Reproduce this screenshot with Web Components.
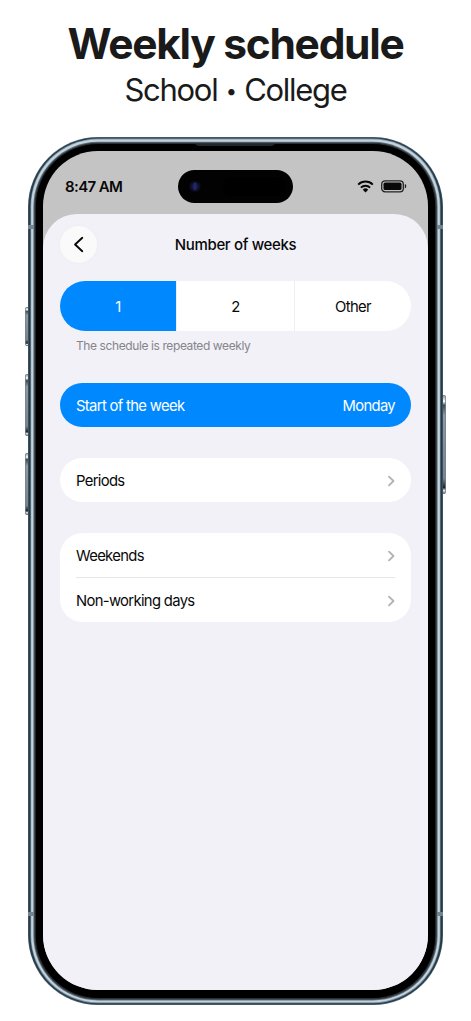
<!DOCTYPE html>
<html lang="en">
<head>
<meta charset="utf-8">
<meta name="viewport" content="width=device-width, initial-scale=1">
<title>Weekly schedule</title>
<style>
  body {
    margin: 0;
    height: 1021px;
    overflow: hidden;
    background: #fff;
    font-family: Inter, "Liberation Sans", sans-serif;
  }

  .dot {
    font-size: 20px;
    line-height: 1;
    vertical-align: 3px;
    margin: 0 1px;
  }
</style>
</head>
<body>
<promo-page>
  <promo-header slot="header" title-text="Weekly schedule">School <span class="dot">•</span> College</promo-header>
  <phone-frame>
    <status-bar slot="status" time="8:47 AM"></status-bar>
    <nav-bar>Number of weeks</nav-bar>
    <segment-control options="1,2,Other" selected="0"></segment-control>
    <hint-text>The schedule is repeated weekly</hint-text>
    <list-group accent>
      <list-row value="Monday">Start of the week</list-row>
    </list-group>
    <list-group>
      <list-row>Periods</list-row>
    </list-group>
    <list-group>
      <list-row>Weekends</list-row>
      <list-row divided>Non-working days</list-row>
    </list-group>
  </phone-frame>
</promo-page>

<script>
class PromoPage extends HTMLElement {
  constructor() {
    super();
    this.attachShadow({ mode: "open" }).innerHTML = `
    <style>
      :host {
        display: flex;
        flex-direction: column;
        width: 471px;
        height: 1021px;
      }
    </style>
    <slot name="header"></slot>
    <slot></slot>
  `;
  }
}
customElements.define("promo-page", PromoPage);

class PromoHeader extends HTMLElement {
  connectedCallback() {
    this.attachShadow({ mode: "open" }).innerHTML = `
    <style>
      :host {
        display: block;
        box-sizing: border-box;
        height: 137px;
        padding-top: 18px;
        text-align: center;
        color: #1a1a1a;
        white-space: nowrap;
      }

      h1 {
        margin: 0;
        font-size: 42.5px;
        line-height: 52px;
        font-weight: 700;
        letter-spacing: -1.3px;
      }

      p {
        margin: 0;
        font-size: 31px;
        line-height: 40px;
        letter-spacing: -1.3px;
      }
    </style>
    <h1>${this.getAttribute("title-text")}</h1>
    <p><slot></slot></p>
  `;
  }
}
customElements.define("promo-header", PromoHeader);

class PhoneFrame extends HTMLElement {
  constructor() {
    super();
    this.attachShadow({ mode: "open" }).innerHTML = `
    <style>
      :host {
        display: block;
        position: relative;
        width: 415px;
        height: 868px;
        margin-left: 28px;
      }

      /* metal rim, black bezel and side buttons lie behind the screen */
      .case {
        position: absolute;
        left: -4px;
        top: 0;
      }

      .screen {
        position: relative;
        box-sizing: border-box;
        display: flex;
        flex-direction: column;
        width: 385px;
        height: 839px;
        margin-left: 15px;
        overflow: hidden;
        border-radius: 55px;
        background: #c4c4c4;
        top: 14px;
      }

      .sheet {
        flex: 1;
        padding: 0 17px;
        border-radius: 34px 34px 0 0;
        background: #f2f1f8;
      }
    </style>
    <svg class="case" width="423" height="868" viewBox="0 0 423 868">
      <defs>
        <linearGradient id="side" x1="0" y1="0" x2="0" y2="1">
          <stop offset="0" stop-color="#8d979e"/>
          <stop offset=".06" stop-color="#fff"/>
          <stop offset=".1" stop-color="#3c4a54"/>
          <stop offset=".2" stop-color="#8b9aa4"/>
          <stop offset=".85" stop-color="#75848e"/>
          <stop offset=".94" stop-color="#17222b"/>
          <stop offset=".97" stop-color="#e5ecf0"/>
          <stop offset="1" stop-color="#59656e"/>
        </linearGradient>
      </defs>
      <g fill="url(#side)" stroke="#4b5963" stroke-width=".6">
        <rect x="1.5" y="170.5" width="4" height="38" rx="1"/>
        <rect x="1.5" y="237.5" width="4" height="61" rx="1"/>
        <rect x="1.5" y="316.5" width="4" height="61" rx="1"/>
        <rect x="417.5" y="258.5" width="4" height="98" rx="1"/>
      </g>
      <rect x="4" y="0" width="415" height="868" rx="70" fill="#4d606e"/>
      <rect x="4.6" y=".7" width="413.8" height="866.6" rx="69.4" fill="#263b49"/>
      <rect x="6.5" y="1.6" width="410" height="864.6" rx="67.5" fill="#7d909d"/>
      <rect x="7.2" y="2.4" width="408.6" height="862.8" rx="66.8" fill="#c3d4df"/>
      <rect x="9.4" y="4.8" width="404.2" height="858.6" rx="64.6" fill="#5c6a75"/>
      <rect x="10.4" y="5.8" width="402.2" height="856.6" rx="63.6" fill="#2b3034"/>
      <rect x="11.8" y="7" width="399.4" height="854" rx="62.2" fill="#000"/>
      <path d="M171 7h80l-3 2h-74z" fill="#22272b"/>
      <path d="M4 90h6M413 90h6M4 777h6M413 777h6" stroke="#75838d" stroke-width="4"/>
    </svg>
    <div class="screen">
      <slot name="status"></slot>
      <div class="sheet"><slot></slot></div>
    </div>
  `;
  }
}
customElements.define("phone-frame", PhoneFrame);

class StatusBar extends HTMLElement {
  connectedCallback() {
    this.attachShadow({ mode: "open" }).innerHTML = `
    <style>
      :host {
        display: grid;
        grid-template-columns: 135px 115px 1fr;
        align-items: start;
        height: 63px;
        color: #080808;
      }

      .time {
        padding: 26px 0 0 22px;
        font-size: 15px;
        line-height: 20px;
        font-weight: 600;
        letter-spacing: -0.6px;
      }

      .island {
        margin-top: 19px;
      }

      .icons {
        display: flex;
        align-items: center;
        gap: 7px;
        padding: 29px 0 0 64px;
      }
    </style>
    <div class="time">${this.getAttribute("time")}</div>
    <svg class="island" width="115" height="33" viewBox="0 0 115 33">
      <defs>
        <radialGradient id="lens">
          <stop offset="0" stop-color="#2b2b78"/>
          <stop offset=".5" stop-color="#12163c"/>
          <stop offset="1" stop-color="#050509"/>
        </radialGradient>
      </defs>
      <rect width="115" height="33" rx="16.5" fill="#020203"/>
      <rect x="43" y="6" width="66" height="21" rx="10.5" fill="#000" stroke="#050506"/>
      <circle cx="17" cy="16.5" r="6" fill="url(#lens)"/>
      <circle cx="17" cy="14" r="1.2" fill="#20316b"/>
      <circle cx="17" cy="18.5" r="1.4" fill="#31206b"/>
    </svg>
    <div class="icons">
      <svg width="17" height="13" viewBox="0 0 17 13" fill="none" stroke="#080808" stroke-width="2">
        <path d="M1.2 4.6a10.4 10.4 0 0 1 14.6 0M3.9 7.6a6.5 6.5 0 0 1 9.2 0"/>
        <path d="M5.8 9.7a3.8 3.8 0 0 1 5.4 0L8.5 12.4z" fill="#080808" stroke="none"/>
      </svg>
      <svg width="26" height="13" viewBox="0 0 26 13">
        <rect x=".7" y=".8" width="21.6" height="11" rx="3.4" fill="none" stroke="#222" stroke-width="1.3"/>
        <rect x="2.5" y="2.6" width="18" height="7.4" rx="1.6" fill="#080808"/>
        <path d="M23.8 4.1c2 .6 2 3.8 0 4.4z" fill="#222"/>
      </svg>
    </div>
  `;
  }
}
customElements.define("status-bar", StatusBar);

class NavBar extends HTMLElement {
  constructor() {
    super();
    this.attachShadow({ mode: "open" }).innerHTML = `
    <style>
      :host {
        display: grid;
        grid-template-columns: 37px 1fr 37px;
        align-items: center;
        height: 37px;
        padding-top: 12px;
        margin-bottom: 18px;
      }

      button {
        display: grid;
        place-items: center;
        width: 37px;
        height: 37px;
        padding: 0;
        border: 0;
        border-radius: 50%;
        background: #fafafb;
        box-shadow: 0 0 5px rgba(0, 0, 0, .025);
      }

      .title {
        text-align: center;
        font-size: 15px;
        line-height: 20px;
        font-weight: 550;
        letter-spacing: -0.35px;
        color: #080808;
      }
    </style>
    <button aria-label="Back">
      <svg width="12" height="17" viewBox="0 0 12 17" fill="none" stroke="#080808" stroke-width="1.9" stroke-linecap="round" stroke-linejoin="round">
        <path d="M9.3 1.8 2.1 8.5l7.2 6.7"/>
      </svg>
    </button>
    <div class="title"><slot></slot></div>
  `;
  }
}
customElements.define("nav-bar", NavBar);

class SegmentControl extends HTMLElement {
  connectedCallback() {
    const selected = Number(this.getAttribute("selected"));
    const items = this.getAttribute("options").split(",");

    this.attachShadow({ mode: "open" }).innerHTML = `
    <style>
      :host {
        display: grid;
        grid-template-columns: 116px 118px 117px;
        height: 50px;
        overflow: hidden;
        border-radius: 25px;
        background: #fff;
      }

      div {
        display: grid;
        place-items: center;
        padding-top: 1px;
        font-size: 14.8px;
        letter-spacing: -0.6px;
        color: #080808;
      }

      div + div {
        border-left: 1px solid #efeff1;
      }

      .on {
        background: #0088ff;
        color: #fff;
      }
    </style>
    ${items.map((t, i) => `<div class="${i === selected ? "on" : ""}">${t}</div>`).join("")}
  `;
  }
}
customElements.define("segment-control", SegmentControl);

class HintText extends HTMLElement {
  constructor() {
    super();
    this.attachShadow({ mode: "open" }).innerHTML = `
    <style>
      :host {
        display: block;
        height: 38px;
        padding: 6px 16px 8px;
        font-size: 12px;
        line-height: 17px;
        letter-spacing: -0.4px;
        color: #85858a;
      }
    </style>
    <slot></slot>
  `;
  }
}
customElements.define("hint-text", HintText);

class ListGroup extends HTMLElement {
  constructor() {
    super();
    this.attachShadow({ mode: "open" }).innerHTML = `
    <style>
      :host {
        display: block;
        margin-bottom: 30.8px;
        overflow: hidden;
        border-radius: 22.5px;
        background: #fff;
        color: #080808;
      }

      :host([accent]) {
        background: #0088ff;
        color: #fff;
      }
    </style>
    <slot></slot>
  `;
  }
}
customElements.define("list-group", ListGroup);

class ListRow extends HTMLElement {
  connectedCallback() {
    const value = this.getAttribute("value");
    const chevron = `
      <svg width="8" height="12" viewBox="0 0 8 12" fill="none" stroke="#b2b2b5" stroke-width="1.8" stroke-linecap="round" stroke-linejoin="round">
        <path d="M2 1.6 6.5 6 2 10.4"/>
      </svg>`;

    this.attachShadow({ mode: "open" }).innerHTML = `
    <style>
      :host {
        display: block;
        padding: 0 16px;
      }

      .row {
        box-sizing: border-box;
        display: flex;
        align-items: center;
        justify-content: space-between;
        height: 44.3px;
        padding-top: 1.4px;
        font-size: 14.8px;
        letter-spacing: -0.66px;
      }

      :host([divided]) .row {
        height: 45px;
        border-top: 1px solid #e6e6e8;
      }
    </style>
    <div class="row">
      <span><slot></slot></span>
      ${value ? `<span>${value}</span>` : chevron}
    </div>
  `;
  }
}
customElements.define("list-row", ListRow);
</script>
</body>
</html>
